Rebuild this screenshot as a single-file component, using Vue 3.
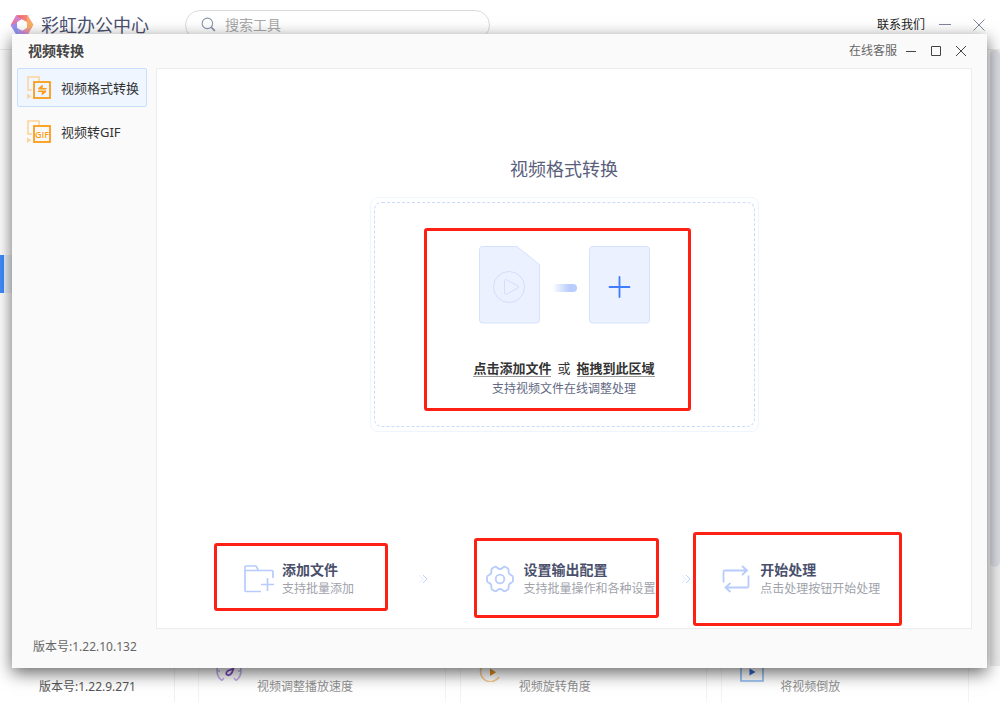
<script setup>
import { ref } from 'vue'

const active = ref(0)
const query = ref('')
const menu = ['视频格式转换', '视频转GIF']
const tools = [
  { kind: 'speed', label: '视频调整播放速度' },
  { kind: 'rotate', label: '视频旋转角度' },
  { kind: 'reverse', label: '将视频倒放' }
]
const logoColors = [
  ['#f7a46e', '#e58ed6'],
  ['#d88ae6', '#8f9bf5'],
  ['#7f93f2', '#b48bea'],
  ['#f0708a', '#c58df0'],
  ['#ee5f72', '#f79a7a'],
  ['#f9a37c', '#fbb254']
]
</script>

<template>
  <div class="desktop">
    <div class="hub">
      <header class="hub-header">
        <svg class="logo" viewBox="-12 -12 24 24" aria-hidden="true">
          <defs>
            <linearGradient v-for="(pair, i) in logoColors" :id="`petal${i}`" :key="i" x1="1" y1="0" x2="0" y2="1">
              <stop offset="0" :stop-color="pair[0]" />
              <stop offset="1" :stop-color="pair[1]" />
            </linearGradient>
          </defs>
          <polygon
            v-for="(pair, i) in logoColors"
            :key="i"
            points="10.5,0.5 5.6,9.3 0,6.5 5.4,3"
            :fill="`url(#petal${i})`"
            :stroke="`url(#petal${i})`"
            stroke-width="1"
            stroke-linejoin="round"
            :transform="`rotate(${i * 60})`"
          />
        </svg>
        <span class="hub-name">彩虹办公中心</span>
        <label class="search">
          <svg viewBox="0 0 16 16" aria-hidden="true">
            <circle cx="6.8" cy="6.8" r="5.6" />
            <path d="M11 11l3.8 3.8" stroke-width="1.8" />
          </svg>
          <input v-model="query" type="text" placeholder="搜索工具" aria-label="搜索工具" />
        </label>
        <a class="contact" href="#">联系我们</a>
        <button class="win-btn hub-btn" aria-label="最小化">
          <svg viewBox="0 0 12 12"><path d="M0 5.5h12" /></svg>
        </button>
        <button class="win-btn hub-btn hub-close" aria-label="关闭">
          <svg viewBox="0 0 12 12"><path d="M.5.5l11 11M11.5.5l-11 11" /></svg>
        </button>
      </header>
      <div class="hub-body">
        <aside class="hub-side">
          <div class="hub-current"></div>
          <div class="hub-version">版本号:1.22.9.271</div>
        </aside>
        <main class="hub-main">
          <article v-for="tool in tools" :key="tool.kind" class="card">
            <svg v-if="tool.kind === 'speed'" class="card-icon" viewBox="0 0 26 26" fill="none">
              <path d="M6 24.500A12 12 0 0 1 6 5M20 24.500A12 12 0 0 0 20 5" stroke="#c5aee9" stroke-width="1.600" />
              <path d="M1 15h3M22 15h3M6 24.500l2-2.500M20 24.500l-2-2.500" stroke="#c5aee9" stroke-width="1.400" />
              <path d="M17.500 12.500l-1.500 4q-2 3.500-4.500 2.500t0-4z" stroke="#8049c8" stroke-width="1.800" stroke-linejoin="round" />
            </svg>
            <svg v-else-if="tool.kind === 'rotate'" class="card-icon" viewBox="0 0 26 26" fill="none">
              <path d="M21 21A10 10 0 1 1 20 9" stroke="#f5cd8e" stroke-width="1.600" />
              <path d="M12 12.500l6 3.700-6 3.700z" fill="#e08a14" />
            </svg>
            <svg v-else class="card-icon" viewBox="0 0 26 26" fill="none">
              <path d="M2 4h22v21H2z" stroke="#8bb6ee" stroke-width="1.600" />
              <path d="M10.500 12.500l6 3.500-6 3.500z" fill="#2e68d0" />
            </svg>
            <span class="card-label">{{ tool.label }}</span>
          </article>
        </main>
        <div class="scroll"><div class="thumb"></div></div>
      </div>
    </div>

    <section class="window">
      <header class="titlebar">
        <h1>视频转换</h1>
        <a class="service" href="#">在线客服</a>
        <button class="win-btn" aria-label="最小化">
          <svg viewBox="0 0 12 12"><path d="M1 6.500h10" /></svg>
        </button>
        <button class="win-btn" aria-label="最大化">
          <svg viewBox="0 0 12 12"><path d="M1.500 1.500h9v9h-9z" /></svg>
        </button>
        <button class="win-btn" aria-label="关闭">
          <svg viewBox="0 0 12 12"><path d="M1 1l10 10M11 1L1 11" /></svg>
        </button>
      </header>

      <div class="content">
        <nav class="menu">
          <button
            v-for="(item, i) in menu"
            :key="item"
            class="menu-item"
            :class="{ active: i === active }"
            @click="active = i"
          >
            <svg viewBox="0 0 24 24" fill="none" aria-hidden="true">
              <path d="M5 14H1V1h11v4" stroke="#fdd49b" stroke-width="1.600" />
              <path d="M0 17.500l4.500 2.700L0 23z" fill="#fdd49b" />
              <rect x="7" y="6" width="16" height="16" stroke="#fb9c1a" stroke-width="1.800" />
              <path
                v-if="i === 0"
                d="M11.500 12.800h8M15 12.500V10l-3.500 2.800M19 15.200h-8M15.500 15.500V18l3.500-2.800"
                fill="#fb9c1a"
                stroke="#fb9c1a"
                stroke-width="1.500"
              />
              <text v-else x="15" y="17.500" text-anchor="middle" class="gif">GIF</text>
            </svg>
            <span>{{ item }}</span>
          </button>
        </nav>

        <main class="panel">
          <h2>视频格式转换</h2>
          <div class="drop">
            <div class="drop-inner">
              <div class="art">
                <svg class="doc" viewBox="0 0 61 78" fill="none">
                  <path d="M3.500.5H38L60.500 18.500V74a3 3 0 0 1-3 3h-54a3 3 0 0 1-3-3V3.500a3 3 0 0 1 3-3z" fill="#ebf1ff" stroke="#d5e2fd" />
                  <circle cx="30" cy="41" r="15.500" stroke="#d2dffb" />
                  <path d="M25.500 34.500v13q.3 1.500 1.700.8L39 42q1.300-1 0-2L27.200 33.700q-1.400-.7-1.700.8z" stroke="#d2dffb" />
                </svg>
                <span class="dash"></span>
                <svg class="doc" viewBox="0 0 61 78" fill="none">
                  <rect x=".5" y=".5" width="60" height="76.500" rx="3" fill="#ebf1ff" stroke="#d5e2fd" />
                  <path d="M30.500 31v20M20.500 41h20" stroke="#3f7dfa" stroke-width="1.800" stroke-linecap="round" />
                </svg>
              </div>
              <p class="hint"><button>点击添加文件</button><span>或</span><b>拖拽到此区域</b></p>
              <p class="sub">支持视频文件在线调整处理</p>
              <div class="marker"></div>
            </div>
          </div>

          <div class="steps">
            <div class="step add">
              <svg viewBox="0 0 30 30" fill="none" stroke="#b7ccfc" stroke-width="1.700" aria-hidden="true">
                <path d="M17 27.500H2a1 1 0 0 1-1-1V3a1 1 0 0 1 1-1h10l2.500 4.500H28a1 1 0 0 1 1 1V14M1 6.500h13.500M17 20.500h13M23.500 14v13" />
              </svg>
              <div><h3>添加文件</h3><p>支持批量添加</p></div>
            </div>
            <svg class="chevrons first" viewBox="0 0 10 10" fill="none"><path d="M1 1l4 4-4 4" stroke="#e6eeff" /><path d="M5 1l4 4-4 4" stroke="#bdd1fc" /></svg>
            <div class="step set">
              <svg viewBox="0 0 28 28" fill="none" stroke="#b7ccfc" stroke-width="1.800" stroke-linejoin="round" aria-hidden="true">
                <path d="M9 1.800Q10.500 1.500 11.500 3Q14 5 16.500 3Q17.500 1.500 19 1.800L22 3.600Q23 4.700 22.500 6.500Q22.700 9.500 25 10Q27 10.800 27 12.500V15.500Q27 17.200 25 18Q22.700 18.500 22.500 21.500Q23 23.300 22 24.400L19 26.200Q17.500 26.500 16.500 25Q14 23 11.500 25Q10.500 26.500 9 26.200L6 24.400Q5 23.300 5.500 21.500Q5.300 18.500 3 18Q1 17.200 1 15.500V12.500Q1 10.800 3 10Q5.300 9.500 5.500 6.500Q5 4.700 6 3.600Z" />
                <circle cx="14" cy="14" r="4.300" />
              </svg>
              <div><h3>设置输出配置</h3><p>支持批量操作和各种设置</p></div>
            </div>
            <svg class="chevrons second" viewBox="0 0 10 10" fill="none"><path d="M1 1l4 4-4 4" stroke="#e6eeff" /><path d="M5 1l4 4-4 4" stroke="#bdd1fc" /></svg>
            <div class="step run">
              <svg viewBox="0 0 28 28" fill="none" stroke="#b7ccfc" stroke-width="1.800" aria-hidden="true">
                <path d="M1.500 17.500V7a1.500 1.500 0 0 1 1.500-1.500h22M20 1l5 4.500-5 4.500M26.500 10.500V21a1.500 1.500 0 0 1-1.500 1.500H3.500M8.500 18l-5 4.500 5 4.500" />
              </svg>
              <div><h3>开始处理</h3><p>点击处理按钮开始处理</p></div>
            </div>
          </div>
        </main>
      </div>
      <footer class="window-foot">版本号:1.22.10.132</footer>
    </section>
  </div>
</template>

<style>
body {
  margin: 0;
}
</style>

<style scoped>
.desktop {
  position: relative;
  min-height: 100vh;
  display: flex;
  overflow: hidden;
  background: #fff;
  color: #333;
  font-family: "Noto Sans", "Noto Sans CJK SC", sans-serif;
  font-size: 12px;
  line-height: 20px;
}
.desktop * {
  box-sizing: border-box;
}
h1, h2, h3, p {
  margin: 0;
}
button, input {
  padding: 0;
  border: 0;
  background: none;
  color: inherit;
  font: inherit;
}
button {
  cursor: pointer;
}
a {
  color: inherit;
  text-decoration: none;
}
svg {
  display: block;
  flex: none;
}
.hub {
  flex: 1;
  display: flex;
  flex-direction: column;
}
.hub-header {
  height: 50px;
  display: flex;
  align-items: center;
  padding: 0 15px 0 10px;
  border-bottom: 1px solid #ececec;
}
.logo {
  width: 24px;
  height: 24px;
}
.hub-name {
  width: 144px;
  margin-left: 7px;
  color: #4a5170;
  font-size: 18px;
  white-space: nowrap;
}
.search {
  width: 305px;
  height: 30px;
  display: flex;
  align-items: center;
  gap: 9px;
  margin-right: auto;
  padding: 0 15px;
  border: 1px solid #dcdcdf;
  border-radius: 15px;
}
.search svg {
  width: 15px;
  height: 15px;
  fill: none;
  stroke: #8b95ad;
  stroke-width: 1.2;
}
.search input {
  flex: 1;
  min-width: 0;
  outline: 0;
  font-size: 14px;
}
.search input::placeholder {
  color: #a9a9a9;
  opacity: 1;
}
.contact {
  color: #222;
}
.win-btn {
  width: 12px;
  height: 12px;
  color: #444;
}
.win-btn svg {
  width: 12px;
  height: 12px;
  fill: none;
  stroke: currentColor;
}
.hub-btn {
  margin-left: 14px;
  color: #7d859b;
}
.hub-close {
  margin-left: 22px;
}
.hub-body {
  flex: 1;
  display: flex;
}
.hub-side {
  width: 175px;
  display: flex;
  flex-direction: column;
  justify-content: space-between;
  padding-top: 205px;
  border-right: 1px solid #f0f0f0;
}
.hub-current {
  height: 38px;
  border-left: 4px solid #3f8cff;
  background: #eef4fb;
}
.hub-version {
  padding: 0 0 5px 39px;
  color: #555;
}
.hub-main {
  flex: 1;
  display: grid;
  grid-template-columns: repeat(3, 1fr);
  gap: 14px;
  align-items: end;
  padding: 0 21px 0 23px;
}
.card {
  height: 90px;
  display: flex;
  align-items: flex-end;
  gap: 15px;
  padding: 0 0 5px 17px;
  border: solid #f3f3f3;
  border-width: 0 1px;
  color: #909090;
  white-space: nowrap;
}
.card-icon {
  width: 26px;
  height: 26px;
  margin-bottom: 15px;
}
.scroll {
  width: 10px;
  margin-bottom: 36px;
  background: #eee;
}
.thumb {
  height: 84%;
  border-radius: 5px;
  background: #dcdde4;
}
.window {
  position: absolute;
  inset: 34px 13px 34px 12px;
  display: flex;
  flex-direction: column;
  background: #fafafa;
  box-shadow: 0 5px 16px rgba(0, 0, 0, 0.6);
}
.titlebar {
  height: 34px;
  display: flex;
  align-items: center;
  gap: 13px;
  padding: 0 20px 0 16px;
}
.titlebar h1 {
  margin-right: auto;
  color: #444;
  font-size: 14px;
  font-weight: 700;
}
.service {
  margin-right: -5px;
  color: #666;
}
.content {
  flex: 1;
  display: flex;
  padding-right: 15px;
}
.menu {
  width: 144px;
  display: flex;
  flex-direction: column;
  gap: 5px;
  padding: 0 9px 0 5px;
}
.menu-item {
  height: 39px;
  display: flex;
  align-items: center;
  gap: 10px;
  padding-left: 9px;
  border: 1px solid transparent;
  border-radius: 2px;
  font-size: 13px;
  white-space: nowrap;
}
.menu-item svg {
  width: 24px;
  height: 24px;
}
.menu-item.active {
  border-color: #c7dffd;
  background: #eff6ff;
}
.gif {
  fill: #fb9c1a;
  font: 600 9px "Open Sans", sans-serif;
}
.panel {
  flex: 1;
  display: flex;
  flex-direction: column;
  align-items: center;
  padding-top: 87px;
  border: 1px solid #ececec;
  background: #fff;
}
.panel h2 {
  margin-bottom: 15px;
  color: #5a607c;
  font-size: 18px;
  font-weight: 400;
  line-height: 26px;
}
.drop {
  width: 389px;
  padding: 4px 3px;
  border: 1px solid #eef5ff;
  border-radius: 8px;
}
.drop-inner {
  position: relative;
  padding: 43px 0 27px;
  border: 1px dashed #ccdafc;
  border-radius: 8px;
  text-align: center;
}
.art {
  display: flex;
  align-items: center;
  justify-content: center;
  gap: 12px;
}
.doc {
  width: 61px;
  height: 78px;
}
.dash {
  width: 25px;
  height: 8px;
  margin-top: 5px;
  border-radius: 4px;
  background: linear-gradient(90deg, #fff, #b8cdfb 70%);
}
.hint {
  display: flex;
  justify-content: center;
  align-items: flex-start;
  gap: 6px;
  margin-top: 35px;
  font-size: 13px;
  line-height: 18px;
}
.hint button, .hint b {
  height: 18px;
  border-bottom: 1px solid #999;
  color: #333;
  font-weight: 700;
  line-height: 18px;
}
.sub {
  margin-top: 2px;
  color: #626884;
}
.marker {
  position: absolute;
  inset: 25px 63px 15px 49px;
  border: 3px solid #fc2114;
  border-radius: 3px;
  pointer-events: none;
}
.steps {
  align-self: stretch;
  display: grid;
  grid-template-columns: 174fr 86fr 186fr 34fr 209fr;
  align-items: center;
  margin-top: auto;
  padding: 0 69px 2px 57px;
}
.step {
  display: flex;
  align-items: center;
  border: 3px solid #fc2114;
  border-radius: 3px;
  white-space: nowrap;
}
.step h3 {
  color: #4a506c;
  font-size: 14px;
  font-weight: 700;
}
.step p {
  color: #a0a2ab;
  line-height: 18px;
}
.add {
  gap: 8px;
  margin-bottom: 4px;
  padding: 14px 0 10px 27px;
}
.add svg {
  width: 30px;
  height: 30px;
}
.set {
  gap: 10px;
  margin-bottom: 2px;
  padding: 19px 0 17px 9px;
}
.run {
  gap: 10px;
  padding: 25px 0 25px 26px;
}
.set svg, .run svg {
  width: 28px;
  height: 28px;
}
.chevrons {
  width: 10px;
  height: 10px;
  justify-self: center;
}
.first {
  margin-right: 16px;
}
.second {
  margin-left: 20px;
}
.window-foot {
  height: 39px;
  padding: 8px 0 0 21px;
  color: #666;
}
</style>
